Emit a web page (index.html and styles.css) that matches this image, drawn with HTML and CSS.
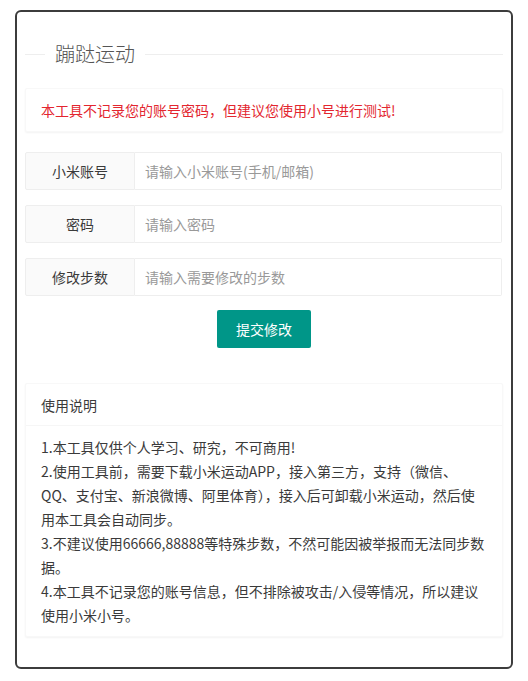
FILE: index.html
```html
<!DOCTYPE html>
<html lang="zh-CN">
<head>
    <meta charset="UTF-8">
    <meta name="viewport" content="width=device-width, initial-scale=1.0">
    <title>蹦跶运动</title>
    <link rel="stylesheet" href="styles.css">
</head>
<body>
    <div class="wrap">
        <fieldset class="field-title">
            <legend>蹦跶运动</legend>
        </fieldset>

        <div class="card">
            <div class="card-body tip-red">本工具不记录您的账号密码，但建议您使用小号进行测试!</div>
        </div>

        <form class="form-pane" onsubmit="return false;">
            <div class="form-item">
                <label class="form-label" for="account">小米账号</label>
                <input type="text" id="account" class="form-input" placeholder="请输入小米账号(手机/邮箱)">
            </div>
            <div class="form-item">
                <label class="form-label" for="password">密码</label>
                <input type="password" id="password" class="form-input" placeholder="请输入密码">
            </div>
            <div class="form-item">
                <label class="form-label" for="steps">修改步数</label>
                <input type="text" id="steps" class="form-input" placeholder="请输入需要修改的步数">
            </div>
            <div class="form-submit">
                <button type="submit" class="btn">提交修改</button>
            </div>
        </form>

        <div class="card">
            <div class="card-header">使用说明</div>
            <div class="card-body">
                1.本工具仅供个人学习、研究，不可商用!<br>
                2.使用工具前，需要下载小米运动APP，接入第三方，支持（微信、QQ、支付宝、新浪微博、阿里体育），接入后可卸载小米运动，然后使用本工具会自动同步。<br>
                3.不建议使用66666,88888等特殊步数，不然可能因被举报而无法同步数据。<br>
                4.本工具不记录您的账号信息，但不排除被攻击/入侵等情况，所以建议使用小米小号。
            </div>
        </div>
    </div>
</body>
</html>
```

FILE: styles.css
```css
* {
    box-sizing: border-box;
}

body {
    margin: 0;
    padding: 10px 15px 12px 15px;
    font-family: "Noto Sans CJK SC", "Liberation Sans", sans-serif;
    font-size: 14px;
    color: #3a3a3a;
    background-color: #fff;
}

.wrap {
    border: 2px solid #3c3c3c;
    border-radius: 6px;
    padding: 0 8px 30px 8px;
}

.field-title {
    margin: 28px 0 20px 0;
    padding: 0;
    border: none;
    border-top: 1px solid #eee;
}

.field-title legend {
    margin-left: 20px;
    padding: 0 10px;
    font-size: 20px;
    font-weight: 300;
    line-height: 28px;
    color: #555;
}

.card {
    background-color: #fff;
    border-radius: 2px;
    box-shadow: 0 1px 2px 0 rgba(0, 0, 0, 0.05);
    border: 1px solid #f8f8f8;
}

.card-header {
    height: 42px;
    line-height: 42px;
    padding: 0 15px;
    border-bottom: 1px solid #f6f6f6;
    color: #3a3a3a;
}

.card-body {
    padding: 9px 15px;
    line-height: 24px;
}

.tip-red {
    color: #e3262f;
}

.form-pane {
    margin: 20px 0 35px 0;
}

.form-item {
    display: flex;
    height: 38px;
    margin-bottom: 15px;
}

.form-label {
    width: 110px;
    flex: none;
    line-height: 36px;
    text-align: center;
    background-color: #fafafa;
    border: 1px solid #eee;
    border-radius: 2px 0 0 2px;
    color: #3a3a3a;
}

.form-input {
    flex: 1;
    min-width: 0;
    height: 38px;
    margin-right: 1px;
    padding-left: 10px;
    border: 1px solid #eee;
    border-left: none;
    border-radius: 0 2px 2px 0;
    font-family: inherit;
    font-size: 14px;
    color: #333;
    outline: none;
}

.form-input::placeholder {
    color: #999;
}

.form-submit {
    display: flex;
    justify-content: center;
    margin-top: -1px;
}

.btn {
    height: 38px;
    padding: 0 18px;
    border: 1px solid transparent;
    border-radius: 2px;
    background-color: #009688;
    color: #fff;
    font-family: inherit;
    font-size: 14px;
    cursor: pointer;
}

.btn:hover {
    opacity: 0.8;
}
```
